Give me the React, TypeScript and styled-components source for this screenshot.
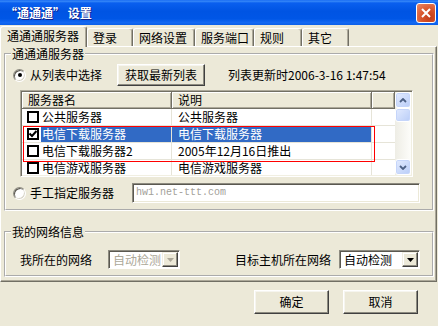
import React from "react";
import styled, { createGlobalStyle } from "styled-components";

const face = "#ece9d8";
const grid = "#e6e4d8";

const GlobalStyle = createGlobalStyle`
  html, body {
    margin: 0;
    padding: 0;
  }
  body {
    background: ${face};
    font-family: "Noto Sans CJK SC", "Liberation Sans", sans-serif;
    font-size: 12px;
    color: #000;
  }
  * {
    box-sizing: border-box;
  }
`;

const Window = styled.div`
  width: 438px;
  height: 326px;
  display: flex;
  flex-direction: column;
  background: ${face};
  overflow: hidden;
`;

const TitleBar = styled.div`
  flex: none;
  height: 25px;
  display: flex;
  align-items: center;
  padding: 0 2px 0 5px;
  background: linear-gradient(
    #0b5ef0 0%,
    #3b8cf9 4%,
    #0a5fef 12%,
    #0054e3 45%,
    #0056e6 75%,
    #1368f2 90%,
    #0b5fe9 100%
  );
`;

const Title = styled.span`
  flex: 1;
  color: #fff;
  font-weight: bold;
  line-height: 14px;
  text-shadow: 1px 1px 0 #0f1f89;
`;

const CloseButton = styled.div`
  width: 20px;
  height: 20px;
  border: 1px solid #fff;
  border-radius: 3px;
  background: radial-gradient(circle at 70% 75%, #c23c18 0%, #d8552c 45%, #e98a6c 100%);
  display: flex;
  align-items: center;
  justify-content: center;
`;

const TabStrip = styled.div`
  flex: none;
  height: 21px;
  display: flex;
  align-items: flex-end;
  position: relative;
  z-index: 1;
`;

const Tab = styled.div<{ $w: number; $active?: boolean }>`
  width: ${(p) => p.$w}px;
  height: ${(p) => (p.$active ? 21 : 18)}px;
  margin-bottom: ${(p) => (p.$active ? -1 : 0)}px;
  padding: ${(p) => (p.$active ? "1px 0 0 6px" : "1px 0 0 5px")};
  line-height: 15px;
  background: ${face};
  border-top: 1px solid #fff;
  border-left: 1px solid #fff;
  border-right: 1px solid #716f64;
  border-radius: 3px 3px 0 0;
  box-shadow: inset -1px 0 0 #aca899;
  white-space: nowrap;
`;

const TabPage = styled.div`
  flex: none;
  width: 437px;
  border: 1px solid;
  border-color: #fff #716f64 #716f64 #fff;
  box-shadow: inset -1px -1px 0 #aca899;
  padding: 0 2px 4px 3px;
`;

const Group = styled.fieldset<{ $top: number; $padTop: number }>`
  margin: ${(p) => p.$top}px 0 0;
  padding: ${(p) => p.$padTop}px 12px 6px 7px;
  border: 2px groove #fff;
  min-width: 0;
`;

const Legend = styled.legend`
  margin-left: -2px;
  padding: 0 1px;
  line-height: 14px;
`;

const OptionRow = styled.div<{ $h: number; $top?: number }>`
  display: flex;
  align-items: center;
  height: ${(p) => p.$h}px;
  margin-top: ${(p) => p.$top ?? 0}px;
`;

const RadioOption = styled.label`
  display: flex;
  align-items: center;
  gap: 4px;
  line-height: 14px;
`;

const Radio = styled.span<{ $checked?: boolean }>`
  width: 13px;
  height: 13px;
  border-radius: 50%;
  border: 1px solid;
  border-color: #8d8b80 #fff #fff #8d8b80;
  box-shadow: inset 1px 1px 0 #5a5850, inset -1px -1px 0 #d8d5c8;
  background: #fff;
  display: flex;
  align-items: center;
  justify-content: center;

  &::after {
    content: "";
    width: 4px;
    height: 4px;
    border-radius: 50%;
    background: ${(p) => (p.$checked ? "#000" : "transparent")};
  }
`;

const Button = styled.button<{ $w: number; $h: number; $left?: number }>`
  width: ${(p) => p.$w}px;
  height: ${(p) => p.$h}px;
  margin: 0 0 0 ${(p) => p.$left ?? 0}px;
  padding: 0;
  font: inherit;
  line-height: 14px;
  color: #000;
  background: ${face};
  border: 1px solid;
  border-color: #fff #404040 #404040 #fff;
  box-shadow: inset -1px -1px 0 #8d8b80, inset 1px 1px 0 #f6f5ef;
`;

const UpdateInfo = styled.span`
  margin-left: 23px;
  line-height: 14px;
  white-space: nowrap;
`;

const ListBox = styled.div`
  margin: 4px 0 0 7px;
  width: 393px;
  height: 87px;
  display: flex;
  border: 1px solid;
  border-color: #aca899 #fff #fff #aca899;
  padding: 1px;
  box-shadow: inset 1px 1px 0 #716f64, inset -1px -1px 0 #f1efe2;
  background: #fff;
`;

const ListMain = styled.div`
  flex: 1;
  min-width: 0;
  display: flex;
  flex-direction: column;
  overflow: hidden;
`;

const Header = styled.div`
  flex: none;
  height: 17px;
  display: flex;
`;

const HeaderCell = styled.div<{ $w?: number }>`
  ${(p) => (p.$w ? `width: ${p.$w}px; flex: none;` : "flex: 1;")}
  padding-left: 6px;
  line-height: 15px;
  background: ${face};
  border-right: 1px solid #716f64;
  border-bottom: 1px solid #716f64;
  box-shadow: inset 1px 1px 0 #fff, inset -1px -1px 0 #aca899;
  white-space: nowrap;
`;

const Marked = styled.div`
  position: relative;

  &::after {
    content: "";
    position: absolute;
    left: 1px;
    top: 0;
    width: 350px;
    bottom: -2px;
    border: 1px solid #ff0000;
    pointer-events: none;
  }
`;

const Row = styled.div`
  flex: none;
  height: 17px;
  display: flex;
  border-bottom: 1px solid ${grid};
`;

const NameCell = styled.div`
  width: 150px;
  flex: none;
  display: flex;
  align-items: center;
  padding-left: 5px;
  border-right: 1px solid ${grid};
`;

const Check = styled.span`
  width: 12px;
  height: 12px;
  flex: none;
  border: 2px solid #000;
  background: #fff;
  display: flex;
  align-items: center;
  justify-content: center;
`;

const CellText = styled.span<{ $selected?: boolean; $pad: number }>`
  align-self: stretch;
  flex: 1;
  padding-left: ${(p) => p.$pad}px;
  line-height: 16px;
  white-space: nowrap;
  overflow: hidden;
  background: ${(p) => (p.$selected ? "#316ac5" : "transparent")};
  color: ${(p) => (p.$selected ? "#fff" : "#000")};
`;

const NameText = styled(CellText)`
  margin-left: 2px;
`;

const NoteCell = styled.div`
  width: 200px;
  flex: none;
  display: flex;
  border-right: 1px solid ${grid};
`;

const Filler = styled.div`
  flex: 1;
`;

const ScrollBar = styled.div`
  width: 16px;
  flex: none;
  display: flex;
  flex-direction: column;
  background: linear-gradient(to right, #eeede5, #fdfdfa);
`;

const ScrollButton = styled.div<{ $h: number }>`
  height: ${(p) => p.$h}px;
  flex: none;
  border: 1px solid #fff;
  border-radius: 3px;
  background: linear-gradient(135deg, #e3ebfe, #b9cdf8);
  box-shadow: inset 0 0 0 1px #c5d5fa;
  display: flex;
  align-items: center;
  justify-content: center;
`;

const Track = styled.div`
  flex: 1;
`;

const TextInput = styled.div`
  margin-left: auto;
  width: 288px;
  height: 20px;
  border: 1px solid;
  border-color: #8d8b80 #fff #fff #8d8b80;
  box-shadow: inset 1px 1px 0 #5a5850, inset -1px -1px 0 #ece9d8;
  background: #fff;
  padding: 0 0 0 3px;
  font-family: "Liberation Mono", "DejaVu Sans Mono", monospace;
  font-size: 10px;
  line-height: 18px;
  color: #a3a19a;
`;

const NetRow = styled.div`
  display: flex;
  align-items: center;
  height: 19px;
  padding-left: 7px;
`;

const FieldLabel = styled.span<{ $auto?: boolean }>`
  line-height: 14px;
  white-space: nowrap;
  margin-left: ${(p) => (p.$auto ? "auto" : "0")};
`;

const Combo = styled.div<{ $w: number; $left: number; $disabled?: boolean }>`
  width: ${(p) => p.$w}px;
  height: 19px;
  margin-left: ${(p) => p.$left}px;
  display: flex;
  border: 1px solid;
  border-color: #8d8b80 #fff #fff #8d8b80;
  box-shadow: inset 1px 1px 0 #5a5850;
  padding: 1px;
  background: #fff;
  color: ${(p) => (p.$disabled ? "#aca899" : "#000")};
`;

const ComboText = styled.span`
  flex: 1;
  padding-left: 3px;
  line-height: 15px;
  white-space: nowrap;
  overflow: hidden;
`;

const ComboArrow = styled.span`
  width: 16px;
  flex: none;
  background: ${face};
  border: 1px solid;
  border-color: #f1efe2 #404040 #404040 #f1efe2;
  box-shadow: inset -1px -1px 0 #8d8b80, inset 1px 1px 0 #fff;
  display: flex;
  align-items: center;
  justify-content: center;
`;

const Footer = styled.div`
  display: flex;
  justify-content: flex-end;
  gap: 14px;
  padding: 8px 20px 0 0;
`;

const Arrow = ({ up }: { up?: boolean }) => (
  <svg width="8" height="5" viewBox="0 0 8 5">
    <path
      d={up ? "M1 4 L4 1 L7 4" : "M1 1 L4 4 L7 1"}
      fill="none"
      stroke="#4d6185"
      strokeWidth="1.8"
    />
  </svg>
);

const Triangle = ({ color }: { color: string }) => (
  <svg width="7" height="4" viewBox="0 0 7 4">
    <path d="M0 0 H7 L3.5 4 Z" fill={color} />
  </svg>
);

const tabs = [
  { label: "通通通服务器", w: 87 },
  { label: "登录", w: 46 },
  { label: "网络设置", w: 62 },
  { label: "服务端口", w: 59 },
  { label: "规则", w: 48 },
  { label: "其它", w: 47 },
];

const App = () => {
  return (
    <Window>
      <GlobalStyle />
      <TitleBar>
        <Title>“通通通” 设置</Title>
        <CloseButton>
          <svg width="12" height="12" viewBox="0 0 12 12">
            <path d="M2 2 L10 10 M10 2 L2 10" stroke="#fff" strokeWidth="2" />
          </svg>
        </CloseButton>
      </TitleBar>

      <TabStrip>
        {tabs.map((t, i) => (
          <Tab key={t.label} $w={t.w} $active={i === 0}>
            {t.label}
          </Tab>
        ))}
      </TabStrip>

      <TabPage>
        <Group $top={0} $padTop={3}>
          <Legend>通通通服务器</Legend>
          <OptionRow $h={22}>
            <RadioOption>
              <Radio $checked />
              从列表中选择
            </RadioOption>
            <Button $w={88} $h={22} $left={15}>
              获取最新列表
            </Button>
            <UpdateInfo>列表更新时2006-3-16 1:47:54</UpdateInfo>
          </OptionRow>

          <ListBox>
            <ListMain>
              <Header>
                <HeaderCell $w={150}>服务器名</HeaderCell>
                <HeaderCell $w={200}>说明</HeaderCell>
                <HeaderCell />
              </Header>
              <Row>
                <NameCell>
                  <Check />
                  <NameText $pad={1}>公共服务器</NameText>
                </NameCell>
                <NoteCell>
                  <CellText $pad={6}>公共服务器</CellText>
                </NoteCell>
                <Filler />
              </Row>
              <Marked>
                <Row>
                  <NameCell>
                    <Check>
                      <svg width="8" height="8" viewBox="0 0 8 8">
                        <path d="M0.5 3.5 L3 6 L7.5 1" fill="none" stroke="#000" strokeWidth="2" />
                      </svg>
                    </Check>
                    <NameText $pad={1} $selected>
                      电信下载服务器
                    </NameText>
                  </NameCell>
                  <NoteCell>
                    <CellText $pad={6} $selected>
                      电信下载服务器
                    </CellText>
                  </NoteCell>
                  <Filler />
                </Row>
                <Row>
                  <NameCell>
                    <Check />
                    <NameText $pad={1}>电信下载服务器2</NameText>
                  </NameCell>
                  <NoteCell>
                    <CellText $pad={6}>2005年12月16日推出</CellText>
                  </NoteCell>
                  <Filler />
                </Row>
              </Marked>
              <Row>
                <NameCell>
                  <Check />
                  <NameText $pad={1}>电信游戏服务器</NameText>
                </NameCell>
                <NoteCell>
                  <CellText $pad={6}>电信游戏服务器</CellText>
                </NoteCell>
                <Filler />
              </Row>
            </ListMain>
            <ScrollBar>
              <ScrollButton $h={16}>
                <Arrow up />
              </ScrollButton>
              <ScrollButton $h={14} />
              <Track />
              <ScrollButton $h={16}>
                <Arrow />
              </ScrollButton>
            </ScrollBar>
          </ListBox>

          <OptionRow $h={20} $top={6}>
            <RadioOption>
              <Radio />
              手工指定服务器
            </RadioOption>
            <TextInput>hw1.net-ttt.com</TextInput>
          </OptionRow>
        </Group>

        <Group $top={14} $padTop={11}>
          <Legend>我的网络信息</Legend>
          <NetRow>
            <FieldLabel>我所在的网络</FieldLabel>
            <Combo $w={72} $left={16} $disabled>
              <ComboText>自动检测</ComboText>
              <ComboArrow>
                <Triangle color="#aca899" />
              </ComboArrow>
            </Combo>
            <FieldLabel $auto>目标主机所在网络</FieldLabel>
            <Combo $w={81} $left={8}>
              <ComboText>自动检测</ComboText>
              <ComboArrow>
                <Triangle color="#000" />
              </ComboArrow>
            </Combo>
          </NetRow>
        </Group>
      </TabPage>

      <Footer>
        <Button $w={75} $h={24}>
          确定
        </Button>
        <Button $w={75} $h={24}>
          取消
        </Button>
      </Footer>
    </Window>
  );
};

export default App;
